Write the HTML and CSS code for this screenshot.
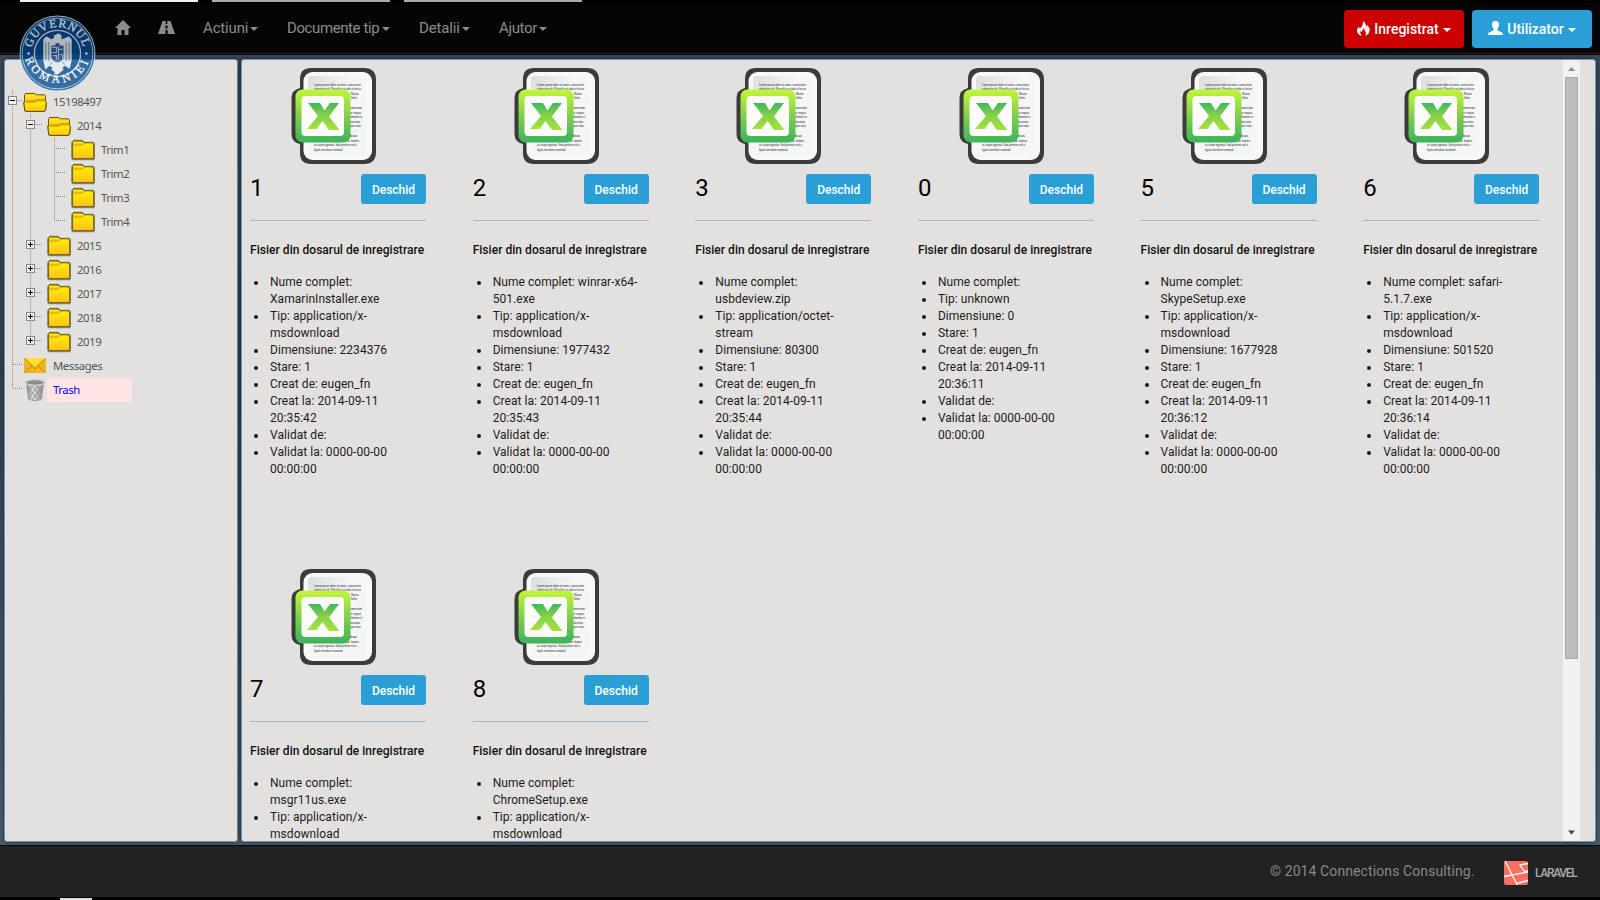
FILE: index.html
```html
<!DOCTYPE html>
<html lang="ro">
<head>
<meta charset="utf-8">
<title>Dosare</title>
<link rel="stylesheet" href="styles.css">
</head>
<body>
<svg class="defs" width="0" height="0" aria-hidden="true">
  <defs>
    <linearGradient id="gFolder" x1="0" y1="0" x2="0" y2="1"><stop offset="0" stop-color="#fff200"/><stop offset="1" stop-color="#ffc21a"/></linearGradient>
    <linearGradient id="gGreen" x1="0" y1="0" x2="0" y2="1"><stop offset="0" stop-color="#c4f53a"/><stop offset=".5" stop-color="#7fd04a"/><stop offset="1" stop-color="#3bb35c"/></linearGradient>
    <linearGradient id="gX" x1="0" y1="0" x2="0" y2="1"><stop offset="0" stop-color="#3fb85f"/><stop offset=".45" stop-color="#84d048"/><stop offset="1" stop-color="#a6e23e"/></linearGradient>
    <linearGradient id="gPage" x1="0" y1="0" x2="1" y2="1"><stop offset="0" stop-color="#d9dde0"/><stop offset=".4" stop-color="#f5f6f6"/><stop offset="1" stop-color="#f4f5f6"/></linearGradient>
    <linearGradient id="gCan" x1="0" y1="0" x2="1" y2="0"><stop offset="0" stop-color="#8d8d8d"/><stop offset=".4" stop-color="#dcdcdc"/><stop offset="1" stop-color="#8a8a8a"/></linearGradient>
    <symbol id="closed" viewBox="0 0 24 24">
      <path d="M2 4.5V3.5L3 2.5H11L13 4.5H22L23.5 6V20.5L22.5 21.5H2L.8 20V5Z" fill="url(#gFolder)" stroke="#85847e" stroke-width="1.4"/>
      <path d="M1.6 20V3.6L2.4 3H11L13 4.8H21.8L22.6 6V20.6H2Z" fill="url(#gFolder)" stroke="#66520c" stroke-width=".9"/>
      <path d="M2 5.5H12L13 7H11.5L11 8H2Z" fill="#f0b020"/>
    </symbol>
    <symbol id="open" viewBox="0 0 24 24">
      <path d="M1.500 11V4.500L2.500 3.500H11.5L13 4.800H21.5L22.5 6.500V14H2Z" fill="#ffe01c" stroke="#66520c"/>
      <path d="M3 9.500H12L13.500 8.500H22V12H3Z" fill="#f9a81c"/>
      <path d="M.6 12H12L13.5 10.800H22.6L23.4 12L22.6 20L21.6 21.4H3L1.800 21Z" fill="url(#gFolder)" stroke="#a07c10" stroke-width=".8"/>
      <path d="M.8 12L1.800 21L3 21.400H21.600L22.600 20L23.400 12" fill="none" stroke="#66520c"/>
    </symbol>
    <symbol id="plus" viewBox="0 0 9 9"><rect x=".5" y=".5" width="8" height="8" fill="#eee" stroke="#888"/><path d="M2 4.5H7M4.5 2V7" stroke="#000"/></symbol>
    <symbol id="minus" viewBox="0 0 9 9"><rect x=".5" y=".5" width="8" height="8" fill="#eee" stroke="#888"/><path d="M2 4.5H7" stroke="#000"/></symbol>
    <symbol id="year" viewBox="0 0 42 24"><path class="dots" d="M7.5 0V24M25.5 0V24M30 10.5H37"/><use href="#plus" x="21" y="6" width="9" height="9"/></symbol>
    <symbol id="trim" viewBox="0 0 66 24"><path class="dots" d="M7.5 0V24M25.5 0V24M49.5 0V24M49 10.5H61"/></symbol>
    <symbol id="doc" viewBox="0 0 86 98">
      <path d="M20 1H73Q85 1 85 13V85Q85 97 73 97H20Q9 97 9 86V77Q.5 75 .5 67V31Q.5 23 9 21V12Q9 1 20 1Z" fill="#3b3b3a"/>
      <rect x="12.500" y="5" width="68.500" height="88" rx="9" fill="#f8f8f8"/>
      <path d="M21 9H69Q75.500 9 75.500 15V83Q75.500 89 69 89H23Q17 89 17 83V13Q17 9 21 9Z" fill="url(#gPage)"/>
      <g class="lorem">
        <text x="23" y="18.500" textLength="47" lengthAdjust="spacingAndGlyphs">Lorem ipsum dolor sit amet, consectetur</text>
        <text x="23" y="23" textLength="47" lengthAdjust="spacingAndGlyphs">adipiscing elit. Phasellus et odio ut lectus</text>
        <text x="60" y="27.500" textLength="8" lengthAdjust="spacingAndGlyphs">Nunc</text>
        <text x="60" y="32" textLength="6" lengthAdjust="spacingAndGlyphs">felis</text>
        <text x="58" y="42" textLength="13" lengthAdjust="spacingAndGlyphs">momentum</text>
        <text x="59" y="46.500" textLength="11" lengthAdjust="spacingAndGlyphs">or neque</text>
        <text x="59" y="51" textLength="12" lengthAdjust="spacingAndGlyphs">bibendum et</text>
        <text x="59" y="55.500" textLength="10" lengthAdjust="spacingAndGlyphs">lacinia</text>
        <text x="59" y="60" textLength="11" lengthAdjust="spacingAndGlyphs">quis vitae</text>
        <text x="58" y="70" textLength="8" lengthAdjust="spacingAndGlyphs">ibus</text>
        <text x="56" y="74.500" textLength="12" lengthAdjust="spacingAndGlyphs">ac fames</text>
        <text x="23" y="79" textLength="43" lengthAdjust="spacingAndGlyphs">ac turpis egestas. Sed porttitor nisl a</text>
        <text x="23" y="83.500" textLength="29" lengthAdjust="spacingAndGlyphs">ligula interdum euismod.</text>
      </g>
      <rect x="4.500" y="22.500" width="55" height="53" rx="7" fill="url(#gGreen)"/>
      <rect x="10.500" y="29" width="42.500" height="40" rx="4" fill="#fbfbfa"/>
      <path d="M17 36H29L33.500 43.500L39 36H48L38 49.500L48.500 63H38L31.500 54L25.500 62H16L27 49Z" fill="url(#gX)"/>
    </symbol>
  </defs>
</svg>

<div class="tabs"><i class="on"></i><i></i><i></i></div>

<header class="nav">
  <svg class="seal" viewBox="0 0 76 76" role="img">
    <defs>
      <path id="arcTop" d="M16.100 52A26 26 0 1 1 59.900 52"/>
      <path id="arcBottom" d="M5 34A33 33 0 1 0 71 34"/>
    </defs>
    <circle cx="38" cy="38" r="37" fill="#00488f" stroke="#d5deea" stroke-width="1"/>
    <circle cx="38" cy="38" r="34.900" fill="none" stroke="#d5deea" stroke-width=".8"/>
    <circle cx="38" cy="38" r="22.800" fill="none" stroke="#d5deea" stroke-width="1.300"/>
    <text class="seal-text"><textPath href="#arcTop" startOffset="50%" text-anchor="middle">GUVERNUL</textPath></text>
    <text class="seal-text low"><textPath href="#arcBottom" startOffset="50%" text-anchor="middle">ROMÂNIEI</textPath></text>
    <circle cx="9.500" cy="38" r="1.300" fill="#fff"/><circle cx="66.500" cy="38" r="1.300" fill="#fff"/>
    <path d="M24 24L27 21L32 24L34 23L35 20L39 18L42 20V24L45 23L49 21L52 24V45L50 53L45 50L43 52L44 54L38 59L32 54L33 52L30 50L26 54L24 45Z" fill="#e8eef4"/>
    <path d="M32 30H36V28H40V30H44V42Q43 46 38 47Q33 46 32 42Z" fill="#2b5d97"/>
    <path d="M33 32H37V37H33M39 31V44M39 34H43M34 40H37V44M40 39H43V43" fill="none" stroke="#c3d2e2" stroke-width="1.200"/>
    <path d="M26.500 27V45M29.500 27V46M46.500 27V46M49.500 27V45M31 49L33 46M45 49L43 46" stroke="#2b5d97" stroke-width=".7"/>
  </svg>
  <nav class="menu">
    <a class="m-home"><svg width="16" height="15" viewBox="0 0 16 15"><path d="M8 0L16 8H13.500V15H9.500V10H6.500V15H2.500V8H0Z"/></svg></a>
    <a class="m-road"><svg width="17" height="13" viewBox="0 0 17 13"><path fill-rule="evenodd" d="M4.500 0H7.700V3H9.300V0H12.500L17 13H9.600V9H7.400V13H0ZM7.600 4.500L7.400 7.500H9.600L9.400 4.500Z"/></svg></a>
    <a class="m-act">Actiuni<b class="caret"></b></a>
    <a class="m-doc">Documente tip<b class="caret sp"></b></a>
    <a class="m-det">Detalii<b class="caret"></b></a>
    <a class="m-aj">Ajutor<b class="caret"></b></a>
  </nav>
  <div class="actions">
    <button class="btn big red"><svg width="13" height="15" viewBox="0 0 13 15"><path d="M6 0Q9.500 2.500 8.800 6Q10 5.500 9.800 3.500Q13 6.500 12.700 9.500Q12 13.500 8 15Q10 12.500 7.800 9.800Q7 8.500 7.300 7Q4.500 9 5 11Q3.500 10.500 3.700 9Q2.500 12 4.500 15Q.5 13.500 0 10Q0 7.500 2 5.500Q2 7.500 3 7.500Q6.500 4 6 0Z"/></svg>Inregistrat<b class="caret"></b></button>
    <button class="btn big"><svg width="15" height="14" viewBox="0 0 15 14"><path d="M7.500 0Q11.300 0 11 4Q10.800 6.500 9.500 8V9.500L14 11.500Q15 12 15 14H0Q0 12 1 11.500L5.500 9.500V8Q4.200 6.500 4 4Q3.700 0 7.500 0Z"/></svg>Utilizator<b class="caret"></b></button>
  </div>
</header>

<main class="work">
  <aside class="panel side">
    <ul class="tree">
      <li><svg width="18" height="24"><path class="dots" d="M7.500 0V24M12 10.500H18"/><use href="#minus" x="3" y="6" width="9" height="9"/></svg><svg class="ic"><use href="#open"/></svg><span>15198497</span></li>
      <li><svg width="42" height="24"><path class="dots" d="M7.500 0V24M25.500 0V24M30 10.500H37"/><use href="#minus" x="21" y="6" width="9" height="9"/></svg><svg class="ic"><use href="#open"/></svg><span>2014</span></li>
      <li><svg width="66" height="24"><use href="#trim"/></svg><svg class="ic"><use href="#closed"/></svg><span>Trim1</span></li>
      <li><svg width="66" height="24"><use href="#trim"/></svg><svg class="ic"><use href="#closed"/></svg><span>Trim2</span></li>
      <li><svg width="66" height="24"><use href="#trim"/></svg><svg class="ic"><use href="#closed"/></svg><span>Trim3</span></li>
      <li><svg width="66" height="24"><path class="dots" d="M7.500 0V24M25.500 0V24M49.500 0V10M49 10.500H61"/></svg><svg class="ic"><use href="#closed"/></svg><span>Trim4</span></li>
      <li><svg width="42" height="24"><use href="#year"/></svg><svg class="ic"><use href="#closed"/></svg><span>2015</span></li>
      <li><svg width="42" height="24"><use href="#year"/></svg><svg class="ic"><use href="#closed"/></svg><span>2016</span></li>
      <li><svg width="42" height="24"><use href="#year"/></svg><svg class="ic"><use href="#closed"/></svg><span>2017</span></li>
      <li><svg width="42" height="24"><use href="#year"/></svg><svg class="ic"><use href="#closed"/></svg><span>2018</span></li>
      <li><svg width="42" height="24"><path class="dots" d="M7.500 0V24M25.500 0V6M30 10.500H37"/><use href="#plus" x="21" y="6" width="9" height="9"/></svg><svg class="ic"><use href="#closed"/></svg><span>2019</span></li>
      <li><svg width="18" height="24"><path class="dots" d="M7.500 0V24M8 10.500H18"/></svg><svg class="ic" viewBox="0 0 24 24"><rect x="1" y="4" width="22" height="15" rx="1" fill="#f2b51d"/><path d="M1.500 4H22.500L12 13Z" fill="#ffe033"/><path d="M1.500 4.500L10 12.500L12 15.500L14 12.500L22.500 4.500M1.500 18.500L9 12M22.500 18.500L15 12" fill="none" stroke="#b98612" stroke-width=".9"/></svg><span>Messages</span></li>
      <li class="trash"><svg width="18" height="24"><path class="dots" d="M7.500 0V10M8 10.500H18"/></svg><svg class="ic" viewBox="0 0 24 24"><path d="M3.500 5H20.500L18.500 21Q12 24.500 5.500 21Z" fill="url(#gCan)" stroke="#888" stroke-width=".7"/><path d="M4 8L15 22M8 6L18 20M13 6L19 14M20 8L9 22M16 6L6 20M11 6L5 14" stroke="#888" stroke-width=".7"/><ellipse cx="12" cy="4.500" rx="9.500" ry="2.800" fill="#8a8a8a" stroke="#d0d0d0" stroke-width="1.300"/></svg><span>Trash</span></li>
    </ul>
  </aside>

  <section class="panel files">
    <div class="grid">
      <article><svg class="doc"><use href="#doc"/></svg><div class="head"><h3>1</h3><button class="btn">Deschid</button></div><h4>Fisier din dosarul de inregistrare</h4>
        <ul><li>Nume complet:<br>XamarinInstaller.exe</li><li>Tip: application/x-<br>msdownload</li><li>Dimensiune: 2234376</li><li>Stare: 1</li><li>Creat de: eugen_fn</li><li>Creat la: 2014-09-11<br>20:35:42</li><li>Validat de:</li><li>Validat la: 0000-00-00<br>00:00:00</li></ul></article>
      <article><svg class="doc"><use href="#doc"/></svg><div class="head"><h3>2</h3><button class="btn">Deschid</button></div><h4>Fisier din dosarul de inregistrare</h4>
        <ul><li>Nume complet: winrar-x64-<br>501.exe</li><li>Tip: application/x-<br>msdownload</li><li>Dimensiune: 1977432</li><li>Stare: 1</li><li>Creat de: eugen_fn</li><li>Creat la: 2014-09-11<br>20:35:43</li><li>Validat de:</li><li>Validat la: 0000-00-00<br>00:00:00</li></ul></article>
      <article><svg class="doc"><use href="#doc"/></svg><div class="head"><h3>3</h3><button class="btn">Deschid</button></div><h4>Fisier din dosarul de inregistrare</h4>
        <ul><li>Nume complet:<br>usbdeview.zip</li><li>Tip: application/octet-<br>stream</li><li>Dimensiune: 80300</li><li>Stare: 1</li><li>Creat de: eugen_fn</li><li>Creat la: 2014-09-11<br>20:35:44</li><li>Validat de:</li><li>Validat la: 0000-00-00<br>00:00:00</li></ul></article>
      <article><svg class="doc"><use href="#doc"/></svg><div class="head"><h3>0</h3><button class="btn">Deschid</button></div><h4>Fisier din dosarul de inregistrare</h4>
        <ul><li>Nume complet:</li><li>Tip: unknown</li><li>Dimensiune: 0</li><li>Stare: 1</li><li>Creat de: eugen_fn</li><li>Creat la: 2014-09-11<br>20:36:11</li><li>Validat de:</li><li>Validat la: 0000-00-00<br>00:00:00</li></ul></article>
      <article><svg class="doc"><use href="#doc"/></svg><div class="head"><h3>5</h3><button class="btn">Deschid</button></div><h4>Fisier din dosarul de inregistrare</h4>
        <ul><li>Nume complet:<br>SkypeSetup.exe</li><li>Tip: application/x-<br>msdownload</li><li>Dimensiune: 1677928</li><li>Stare: 1</li><li>Creat de: eugen_fn</li><li>Creat la: 2014-09-11<br>20:36:12</li><li>Validat de:</li><li>Validat la: 0000-00-00<br>00:00:00</li></ul></article>
      <article><svg class="doc"><use href="#doc"/></svg><div class="head"><h3>6</h3><button class="btn">Deschid</button></div><h4>Fisier din dosarul de inregistrare</h4>
        <ul><li>Nume complet: safari-<br>5.1.7.exe</li><li>Tip: application/x-<br>msdownload</li><li>Dimensiune: 501520</li><li>Stare: 1</li><li>Creat de: eugen_fn</li><li>Creat la: 2014-09-11<br>20:36:14</li><li>Validat de:</li><li>Validat la: 0000-00-00<br>00:00:00</li></ul></article>
      <article><svg class="doc"><use href="#doc"/></svg><div class="head"><h3>7</h3><button class="btn">Deschid</button></div><h4>Fisier din dosarul de inregistrare</h4>
        <ul><li>Nume complet:<br>msgr11us.exe</li><li>Tip: application/x-<br>msdownload</li></ul></article>
      <article><svg class="doc"><use href="#doc"/></svg><div class="head"><h3>8</h3><button class="btn">Deschid</button></div><h4>Fisier din dosarul de inregistrare</h4>
        <ul><li>Nume complet:<br>ChromeSetup.exe</li><li>Tip: application/x-<br>msdownload</li></ul></article>
    </div>
    <div class="scroll">
      <svg width="17" height="17"><path d="M5 11L8.500 7L12 11Z" fill="#8c8c8c"/></svg>
      <div class="thumb"></div>
      <svg width="17" height="17"><path d="M5 6.500L8.500 10.500L12 6.500Z" fill="#444"/></svg>
    </div>
  </section>
</main>

<footer class="foot">
  <span class="copy">© 2014 Connections Consulting.</span>
  <svg class="lara" width="24" height="24" viewBox="0 0 24 24"><rect width="24" height="24" rx="2" fill="#fb6f62"/><path d="M1 0L12.500 22.500L24 19.500M0 15.500L24 11M13 24L12.500 22.500M24 2.500L16 4L20.500 10.500L24 9.500" fill="none" stroke="#fff" stroke-width="1.300"/></svg>
  <span class="lname">LARAVEL</span>
</footer>
<div class="taskbar"><i></i></div>
</body>
</html>
```
FILE: styles.css
```css
* { box-sizing: border-box; }
body { margin: 0; width: 1600px; height: 900px; overflow: hidden; background: #000; font: 12px/17px Roboto, "Liberation Sans", sans-serif; color: #1c1c1c; display: flex; flex-direction: column; }
ul, h3, h4 { margin: 0; padding: 0; font-weight: 400; }
svg { display: block; flex: none; }
.defs { position: absolute; }
.dots { fill: none; stroke: #888; stroke-dasharray: 1 1; shape-rendering: crispEdges; }
.lorem { font: 3.5px "Liberation Sans", sans-serif; fill: #222; }

.tabs { display: flex; gap: 14px; height: 3px; padding-left: 20px; flex: none; }
.tabs i { width: 178px; height: 2px; background: #a9a9a9; }
.tabs .on { background: #eef1f2; }

.nav { position: relative; z-index: 1; height: 52px; flex: none; display: flex; justify-content: space-between; background: #050505; border-bottom: 1px solid #000; box-shadow: inset 0 -1px #2a2224; }
.seal { position: absolute; left: 19px; top: 12px; width: 77px; height: 77px; opacity: .76; }
.seal-text { font: 11.5px "Liberation Serif", serif; fill: #fff; stroke: #fff; stroke-width: .25px; letter-spacing: .9px; }
.seal-text.low { letter-spacing: 3.4px; }
.menu { display: flex; align-items: flex-start; padding: 14px 0 0 115px; color: #8c8c8c; font-size: 15px; line-height: 22px; fill: #8c8c8c; }
.menu a { display: flex; align-items: center; height: 22px; white-space: nowrap; letter-spacing: -.15px; }
.menu svg { margin-top: -1px; }
.m-home { width: 43px; }
.m-road { width: 45px; }
.m-act { width: 84px; }
.menu .m-doc { width: 132px; letter-spacing: -.4px; }
.m-det { width: 80px; }
.menu .m-aj { letter-spacing: -.35px; }
.caret { border: 4px solid transparent; border-top-color: currentColor; border-bottom: 0; margin-left: 2px; margin-top: 2px; }
.caret.sp { margin-left: 3px; }
.actions { display: flex; gap: 8px; padding: 7px 8px 0 0; }
.btn { width: 65px; height: 30px; border: 0; border-radius: 3px; padding: 1px 0 0; background: #2a9fd6; color: #fff; fill: #fff; font: 500 12px Roboto, sans-serif; }
.btn.big { width: 120px; height: 38px; border-radius: 4px; padding: 0; font-size: 14px; display: flex; align-items: center; justify-content: center; white-space: nowrap; }
.btn.big svg { margin: -2px 4px 0 0; }
.btn.big .caret { margin-left: 4px; }
.btn.red { background: #c00; }

.work { height: 790px; flex: none; display: flex; gap: 3px; padding: 4px 4px 3px; background: linear-gradient(#3b4956, #334150 40%, #4c5e6e); }
.panel { border: 1px solid #7393b3; border-radius: 3px; background: #e2e1df; box-shadow: 0 0 5px #1a2530; overflow: hidden; }
.side { width: 234px; flex: none; padding-top: 30px; }
.tree { list-style: none; font: 11.3px/24px "Noto Sans", sans-serif; letter-spacing: -.4px; color: #555; }
.tree li { display: flex; height: 24px; }
.tree .ic { width: 24px; height: 24px; }
.tree span { padding-left: 6px; }
.tree .trash span { width: 85px; background: #ffe4e4; color: #00f; }

.files { flex: 1; display: flex; justify-content: space-between; padding-right: 15px; }
.grid { width: 1312px; padding-left: 8px; display: grid; grid-template-columns: repeat(6, 222.640px); grid-auto-rows: 501px; }
.grid article { width: 176px; padding-top: 7px; }
.doc { width: 86px; height: 98px; margin-left: 41px; }
.head { display: flex; justify-content: space-between; height: 47px; margin-top: 9px; border-bottom: 1px solid #aab6c2; }
.head h3 { font-size: 24px; line-height: 28px; color: #000; }
.grid h4 { font-weight: 500; font-size: 12px; line-height: 17px; letter-spacing: .04px; margin: 21px 0 15px; white-space: nowrap; color: #111; }
.grid ul { padding-left: 18px; }
.grid li { padding-left: 2px; white-space: nowrap; letter-spacing: .05px; }
.scroll { width: 17px; flex: none; background: #f1f1f1; display: flex; flex-direction: column; }
.thumb { width: 13px; height: 582px; margin: 0 2px auto; background: #bcbcbc; border: 1px solid #a8a8a8; }

.foot { height: 52px; flex: none; background: #222; border-top: 1px solid #050505; display: flex; align-items: center; padding: 2px 0 0 1270px; color: #888; font-size: 14px; }
.copy { width: 234px; white-space: nowrap; letter-spacing: .1px; margin-top: -2px; }
.lname { margin-left: 7px; font: 500 12px "Roboto", sans-serif; color: #aaa; letter-spacing: -1.3px; }
.taskbar { height: 3px; padding: 1px 0 0 60px; }
.taskbar i { display: block; width: 32px; height: 2px; background: #ddd; }
```
